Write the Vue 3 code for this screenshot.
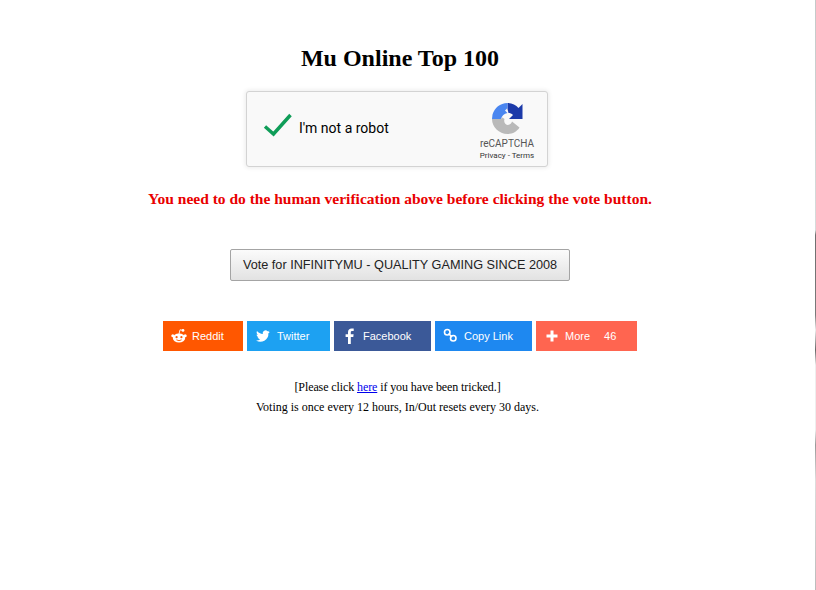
<script setup>
const shares = [
  { name: 'Reddit', cls: 'reddit', icon: 'reddit' },
  { name: 'Twitter', cls: 'twitter', icon: 'twitter' },
  { name: 'Facebook', cls: 'facebook', icon: 'facebook' },
  { name: 'Copy Link', cls: 'copy', icon: 'link' },
  { name: 'More', cls: 'more', icon: 'plus', count: 46 }
]
</script>

<template>
  <div class="page">
    <h1 class="title">Mu Online Top 100</h1>

    <div class="captcha">
      <svg class="check" width="30" height="24" viewBox="0 0 30 24">
        <path d="M2 13.5 L10.5 21 L27.5 2" fill="none" stroke="#0f9d58" stroke-width="3.4" />
      </svg>
      <span class="robot">I'm not a robot</span>
      <div class="brand">
        <svg class="logo" width="31" height="31" viewBox="0 0 31 31">
          <path d="M15.500 0 C20 0 24 2 26.500 5 L30.500 1 V16 H17 L21 12 C19.500 10.500 18 10 16.500 10 L15.500 6 Z" fill="#1c3aa9" />
          <path d="M15.500 0 C8 0 2.500 5 0.500 11.500 L0 16 H9 C10 13 12 10.500 15.500 10 L13 7.500 L15.500 5 Z" fill="#4a86f0" />
          <path d="M0 16 H8.500 L10.500 14.500 L12.500 16 C11.500 19 13 21.500 15.500 22 C18 22 19.500 20.500 20 18.500 L27.500 24.500 C25 28.500 20.500 31 15.500 31 C7 31 0 24 0 16 Z" fill="#b9b9b9" />
        </svg>
        <div class="brand-name">reCAPTCHA</div>
        <div class="brand-links">Privacy - Terms</div>
      </div>
    </div>

    <p class="warning">You need to do the human verification above before clicking the vote button.</p>

    <button class="vote">Vote for INFINITYMU - QUALITY GAMING SINCE 2008</button>

    <div class="shares">
      <a v-for="s in shares" :key="s.name" class="share" :class="s.cls">
        <svg class="icon" width="16" height="16" viewBox="0 0 16 16" fill="#fff">
          <template v-if="s.icon === 'reddit'">
            <ellipse cx="8" cy="10" rx="6.2" ry="4.6" />
            <circle cx="1.8" cy="7.8" r="1.5" />
            <circle cx="14.2" cy="7.8" r="1.5" />
            <circle cx="12" cy="2.4" r="1.4" />
            <path d="M8 6 L9 1.8 L12 2.4" fill="none" stroke="#fff" stroke-width="0.9" />
            <circle cx="5.6" cy="9.2" r="1.1" fill="#ff5700" />
            <circle cx="10.4" cy="9.2" r="1.1" fill="#ff5700" />
            <path d="M5.4 11.8 Q8 13.6 10.6 11.8" fill="none" stroke="#ff5700" stroke-width="0.9" />
          </template>
          <path
            v-else-if="s.icon === 'twitter'"
            d="M14.800 3.700c-.5.200-1.100.4-1.600.4.600-.3 1-.9 1.200-1.500-.5.300-1.200.5-1.800.7A2.800 2.800 0 0 0 7.800 5.900C5.500 5.800 3.400 4.700 2 3c-.7 1.300-.4 2.900.9 3.800-.5 0-.9-.2-1.300-.4 0 1.400 1 2.500 2.300 2.800-.4.100-.8.200-1.300.1.400 1.100 1.400 1.900 2.600 1.900A5.700 5.700 0 0 1 1 12.400 8 8 0 0 0 13.400 5.300c.6-.4 1-.9 1.400-1.600z"
          />
          <path
            v-else-if="s.icon === 'facebook'"
            d="M6 16V9H3.600V6.200H6V4.200C6 1.800 7.500.5 9.600.5c1 0 1.900.1 2.100.1v2.500h-1.500c-1.100 0-1.400.6-1.400 1.400v1.700h2.800L11.300 9H8.800v7z"
          />
          <g v-else-if="s.icon === 'link'" fill="none" stroke="#fff" stroke-width="1.600">
            <rect x="1.500" y="1.500" width="5.500" height="5.500" rx="2.750" />
            <rect x="7.500" y="7.500" width="5.500" height="5.500" rx="2.750" />
            <path d="M5.500 5.500 L9 9" />
          </g>
          <path v-else d="M6.500 2.500h3v4h4v3h-4v4h-3v-4h-4v-3h4z" />
        </svg>
        <span class="label">{{ s.name }}</span>
        <span v-if="s.count" class="count">{{ s.count }}</span>
      </a>
    </div>

    <p class="note first">[Please click <a href="#" class="here">here</a> if you have been tricked.]</p>
    <p class="note second">Voting is once every 12 hours, In/Out resets every 30 days.</p>

    <div class="edge"></div>
  </div>
</template>

<style scoped>
.page {
  width: 800px;
  height: 590px;
  overflow: hidden;
  font-family: "Liberation Serif", serif;
  text-align: center;
  color: #000;
}

.title {
  margin: 0;
  padding-top: 44px;
  font-size: 24px;
  line-height: 28px;
  font-weight: 700;
}

.captcha {
  box-sizing: border-box;
  display: flex;
  align-items: center;
  width: 302px;
  height: 76px;
  margin: 19px 0 0 246px;
  background: #f9f9f9;
  border: 1px solid #d3d3d3;
  border-radius: 3px;
  box-shadow: 0 0 4px 1px rgba(0, 0, 0, 0.08);
  text-align: left;
}

.check {
  margin-left: 16px;
  margin-top: -8px;
}

.robot {
  margin-left: 6px;
  margin-top: -2px;
  font-family: Roboto, "Liberation Sans", sans-serif;
  font-size: 14px;
  color: #000;
}

.brand {
  margin-left: auto;
  width: 80px;
  padding-top: 6px;
  font-family: Roboto, "Liberation Sans", sans-serif;
  text-align: center;
  color: #555;
}

.logo {
  display: block;
  margin: 0 auto;
}

.brand-name {
  margin-top: 3px;
  font-size: 10px;
  line-height: 13px;
}

.brand-links {
  font-size: 8px;
  line-height: 11px;
  color: #333;
}

.warning {
  margin: 23px 0 0;
  font-size: 15.5px;
  line-height: 18px;
  font-weight: 700;
  color: #e90000;
}

.vote {
  display: block;
  box-sizing: border-box;
  width: 340px;
  height: 32px;
  margin: 41px auto 0;
  padding: 0;
  font-family: "Liberation Sans", sans-serif;
  font-size: 12.7px;
  white-space: nowrap;
  color: #222;
  background: linear-gradient(#fbfbfb, #e2e2e2);
  border: 1px solid #a4a4a4;
  border-radius: 2px;
}

.shares {
  display: flex;
  justify-content: center;
  gap: 4px;
  margin-top: 40px;
}

.share {
  display: flex;
  align-items: center;
  height: 30px;
  box-sizing: border-box;
  padding-left: 8px;
  font-family: "Liberation Sans", sans-serif;
  font-size: 11px;
  color: #fff;
}

.icon {
  flex: none;
}

.label {
  margin-left: 5px;
}

.twitter .label {
  margin-left: 6px;
}

.reddit { width: 80px; background: #ff5700; }
.twitter { width: 83px; background: #1da1f2; }
.facebook { width: 97px; background: #3b5998; }
.copy { width: 97px; background: #1e88f0; }
.more { width: 101px; background: #ff6550; }

.count {
  margin-left: 14px;
}

.note {
  margin: 0;
  padding-top: 29px;
  padding-right: 5px;
  font-size: 12px;
  line-height: 14px;
}

.note.first {
  letter-spacing: -0.1px;
}

.note.second {
  padding-top: 6px;
}

.here {
  color: #00e;
  text-decoration: underline;
}

.edge {
  position: fixed;
  top: 0;
  right: 0;
  width: 1px;
  height: 590px;
  background: linear-gradient(#c4c9c9 0, #d6dbdb 230px, #6f6f6f 235px, #7a7a7a 315px, #eee 330px, #666 350px, #eee 365px, #eee 430px, #999 445px, #ddd 480px, #bbb 590px);
}
</style>
